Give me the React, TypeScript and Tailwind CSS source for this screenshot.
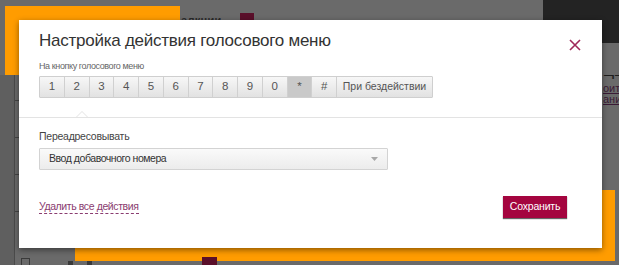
import React from "react";

const KEYS = ["1", "2", "3", "4", "5", "6", "7", "8", "9", "0", "*", "#"];

function KeyButton({ label, active, wide }: { label: string; active?: boolean; wide?: boolean }) {
  return (
    <button
      className={
        "h-full flex items-center justify-center whitespace-nowrap border-r border-[#d0d0d0] last:border-r-0 text-[#555] " +
        (wide ? "w-[95px] text-[10.5px]" : "w-[24.75px] text-[11.5px]") +
        (active ? " bg-[#c9c9c9]" : " bg-gradient-to-b from-[#f7f7f7] to-[#e2e2e2]")
      }
    >
      {label}
    </button>
  );
}

// dimmed page that sits behind the dialog
function Backdrop() {
  return (
    <div className="h-full flex flex-col">
      <div className="h-[75px] flex items-start">
        <div className="ml-[5px] mt-[6px] w-[175px] h-[69px] bg-[#ff9c00]" />
        <div className="mt-[12px] ml-px text-[11px] font-bold text-[#2a2a2a] tracking-wide">алкции</div>
        <div className="mt-[13px] ml-[18px] w-[14px] h-[10px] bg-[#5a0f2a]" />
        <div className="ml-auto w-[76px] h-[43px] bg-[#232323]" />
      </div>
      <div className="flex-1 flex">
        <div className="w-[15px] bg-[#5f5f5f] border-r border-[#4a4a4a] flex flex-col pt-[25px] gap-[36px]">
          {[0, 1, 2, 3].map((i) => (
            <div key={i} className="ml-[15px] w-[4px] h-px bg-[#444]" />
          ))}
        </div>
        <div className="flex-1 flex flex-col">
          <div className="flex-1 flex justify-end">
            <div className="w-[16px] overflow-hidden whitespace-nowrap leading-none">
              <div className="text-[13px] font-bold text-[#1e1e1e] -mt-[10px]">щь</div>
              <div className="mt-[5px] text-[11px] text-[#3a1a35] underline leading-[11px]">
                оит<br />ани
              </div>
            </div>
          </div>
          <div className="ml-[60px] mr-[4px] h-[71px] bg-[#ff9c00]" />
          <div className="h-[4px] flex items-start">
            <div className="ml-[6px] -mt-[3px] w-[9px] h-[9px] border border-[#3a3a3a]" />
            <div className="ml-[38px] w-[5px] h-[4px] bg-[#3a3a3a]" />
            <div className="ml-[14px] w-[5px] h-[4px] bg-[#3a3a3a]" />
            <div className="ml-[110px] -mt-[4px] w-[15px] h-[8px] bg-[#5a0f2a]" />
          </div>
        </div>
      </div>
    </div>
  );
}

export default function App() {
  return (
    <div
      className="relative w-[619px] h-[265px] overflow-hidden bg-[#6a6a6a]"
      style={{ fontFamily: "'Liberation Sans', Arial, sans-serif" }}
    >
      <Backdrop />

      {/* dialog */}
      <div className="absolute left-[19px] top-[20px] w-[583px] h-[228px] bg-white shadow-[0_2px_6px_rgba(0,0,0,0.45)] flex flex-col">
        <div className="px-[20px] pt-[10px]">
          <div className="flex items-start justify-between">
            <h1 className="text-[17px] leading-[22px] tracking-[-0.25px] text-[#333]">Настройка действия голосового меню</h1>
            <button className="mt-[9px] mr-px w-[12px] h-[12px]">
              <svg viewBox="0 0 12 12" width="12" height="12">
                <path d="M1 1 L11 11 M11 1 L1 11" stroke="#a0285a" strokeWidth="1.6" fill="none" />
              </svg>
            </button>
          </div>
          <div className="mt-[8px] text-[9px] leading-[12px] tracking-[-0.4px] text-[#666]">На кнопку голосового меню</div>
          <div className="mt-[4px] inline-flex h-[22px] border border-[#cfcfcf] rounded-[1px] overflow-hidden">
            {KEYS.map((k) => (
              <KeyButton key={k} label={k} active={k === "*"} />
            ))}
            <KeyButton label="При бездействии" wide />
          </div>
        </div>

        <div className="relative mt-[19px] h-px bg-[#e3e3e3]">
          <div className="absolute left-[57px] -top-[6px] w-0 h-0 border-l-[6px] border-r-[6px] border-b-[6px] border-l-transparent border-r-transparent border-b-[#e3e3e3]" />
          <div className="absolute left-[58px] -top-[5px] w-0 h-0 border-l-[5px] border-r-[5px] border-b-[5px] border-l-transparent border-r-transparent border-b-white" />
        </div>

        <div className="px-[20px] pt-[11px]">
          <div className="text-[10.5px] leading-[14px] tracking-[-0.25px] text-[#444]">Переадресовывать</div>
          <div className="mt-[5px] w-[349px] h-[22px] border border-[#d3d3d3] rounded-[1px] bg-gradient-to-b from-[#fafafa] to-[#ececec] flex items-center justify-between pl-[9px] pr-[9px]">
            <span className="text-[10.5px] tracking-[-0.45px] text-[#333]">Ввод добавочного номера</span>
            <svg width="7" height="4" viewBox="0 0 7 4">
              <path d="M0 0 L7 0 L3.5 4 Z" fill="#a8a8a8" />
            </svg>
          </div>
        </div>

        <div className="px-[20px] mt-[26px] flex items-center justify-between">
          <span className="text-[10.5px] leading-[13px] tracking-[-0.4px] text-[#8a3c70] border-b border-dashed border-[#8a3c70]">Удалить все действия</span>
          <button className="mr-[15px] w-[64px] h-[22px] bg-[#a4053f] text-white text-[10.5px] tracking-[-0.2px] shadow-[0_1px_1px_rgba(0,0,0,0.6)]">
            Сохранить
          </button>
        </div>
      </div>
    </div>
  );
}
